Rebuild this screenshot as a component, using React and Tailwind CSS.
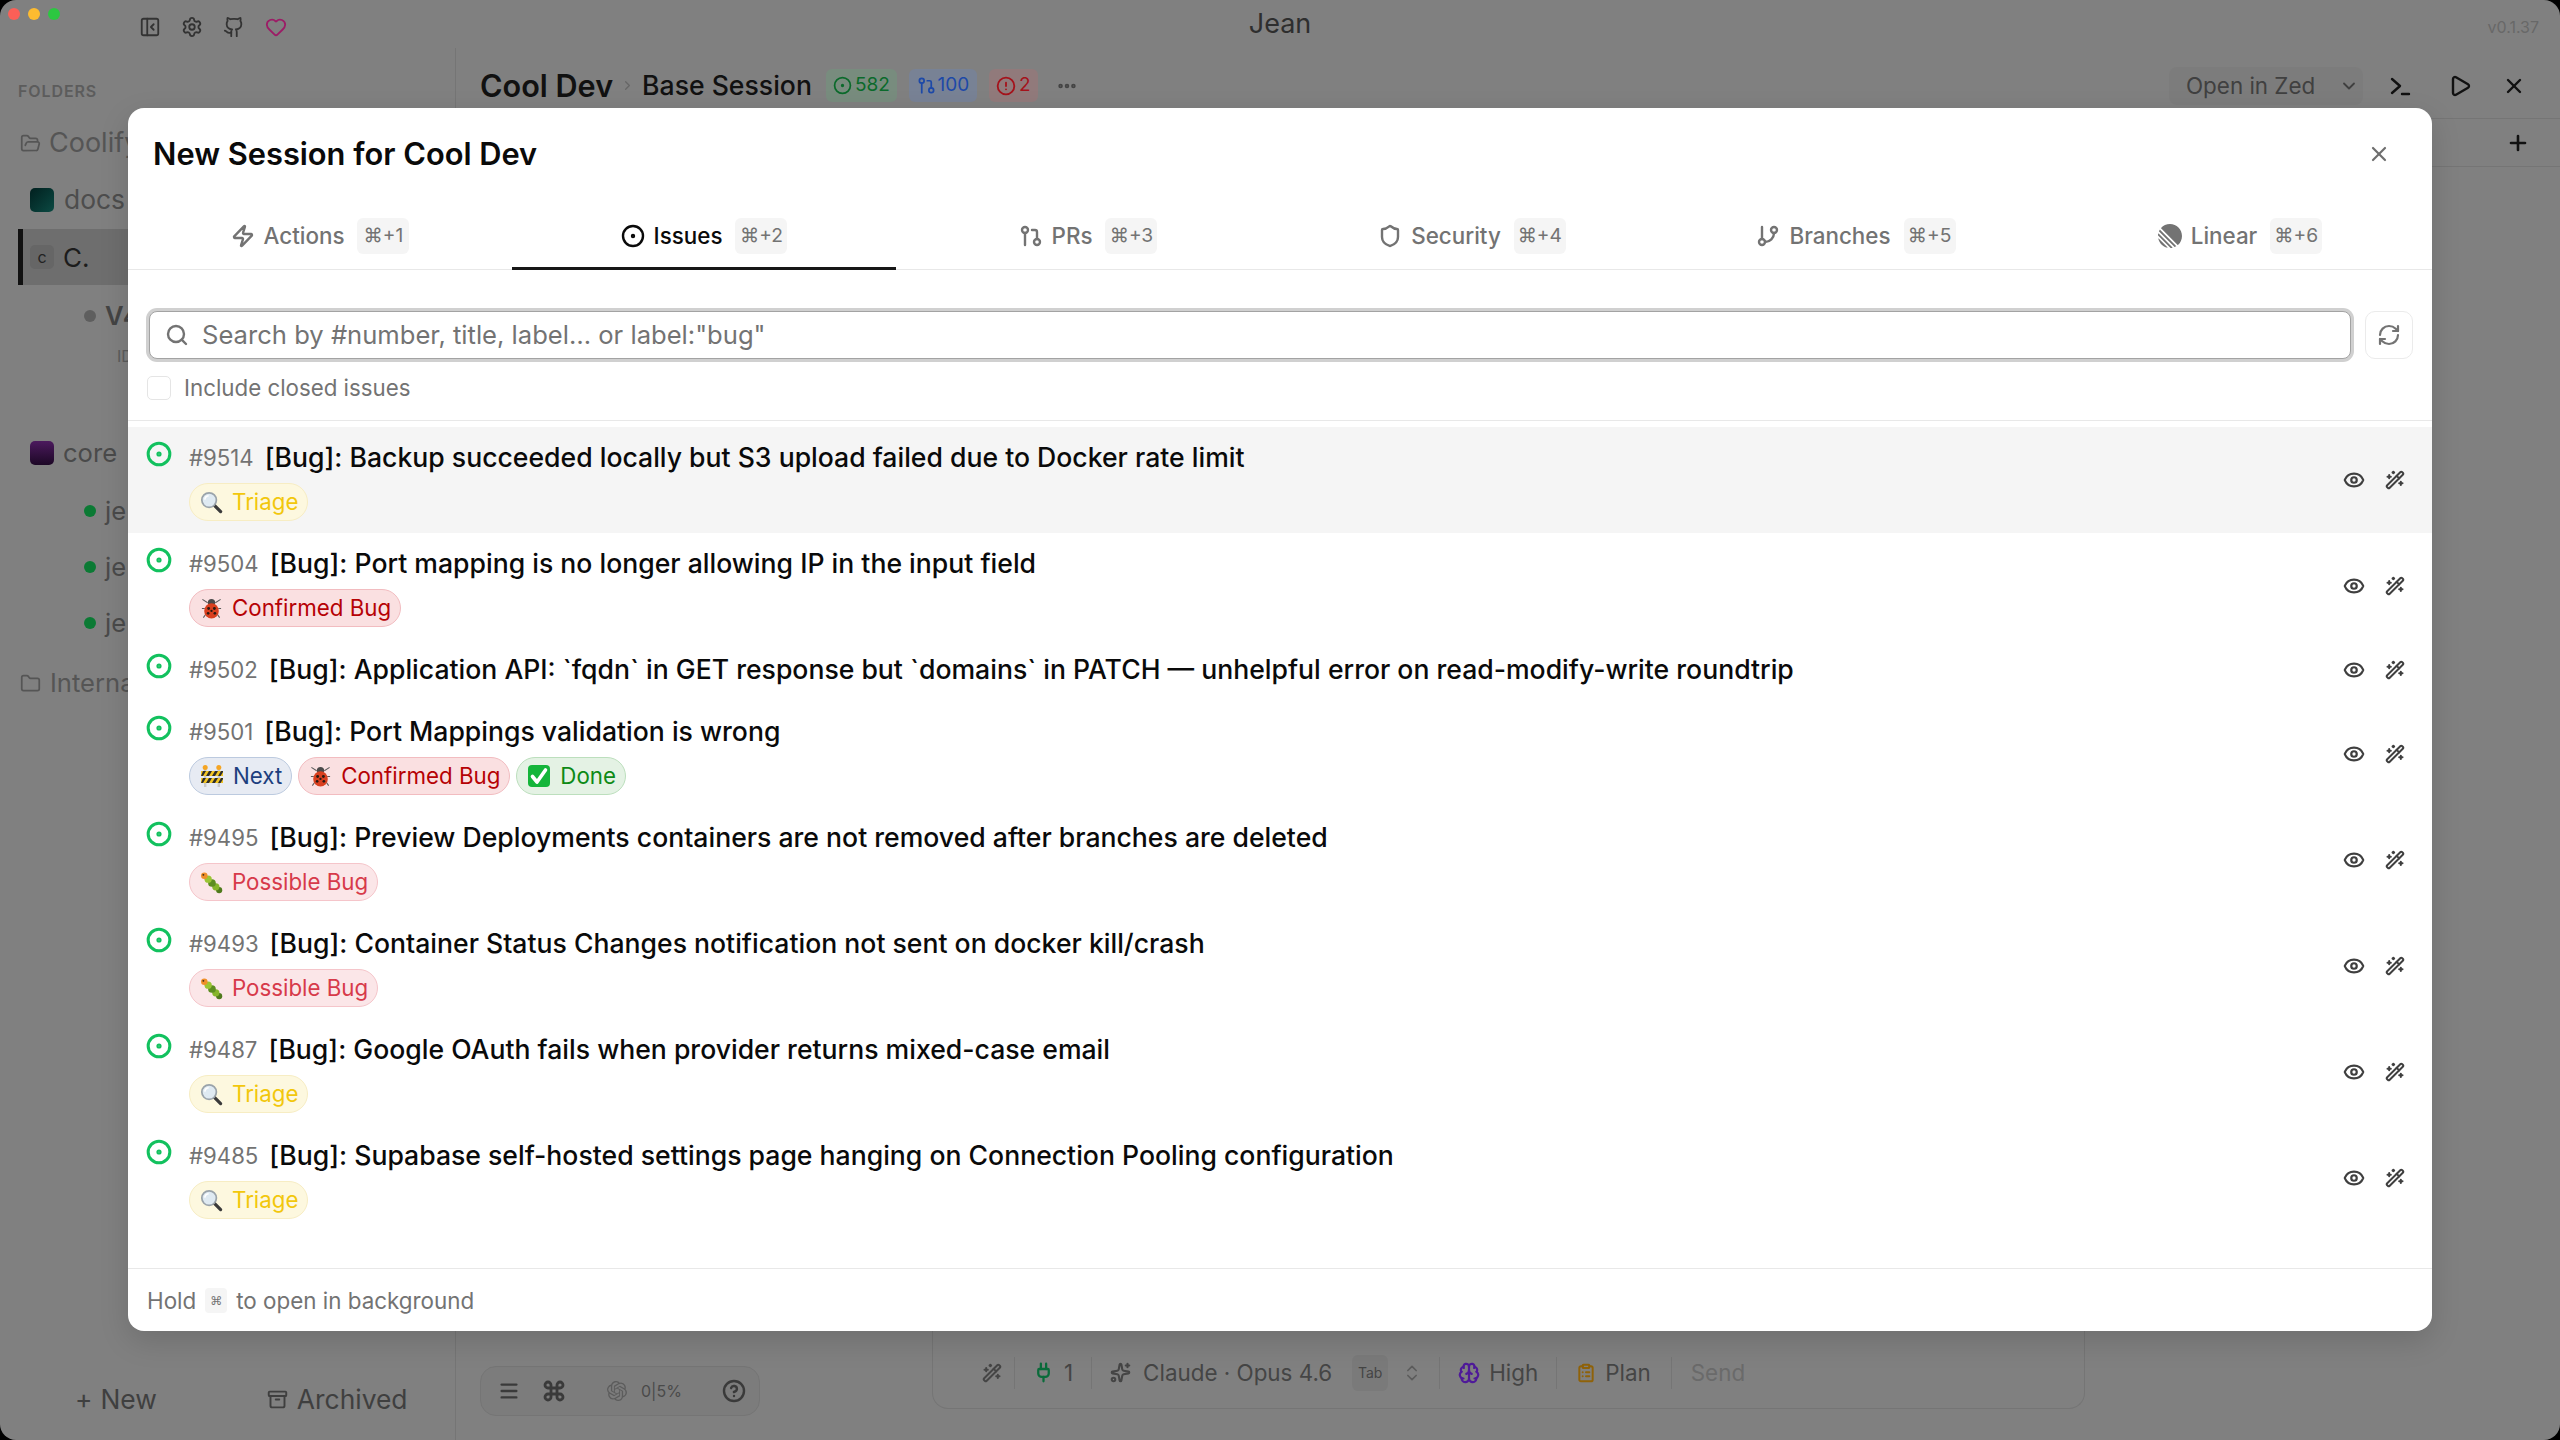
import React from "react";
import {
  Archive, Brain, ChevronDown, ChevronRight, ChevronsUpDown, CircleAlert, CircleDot, CircleHelp, ClipboardList,
  Command, Ellipsis, Eye, Folder, FolderOpen, GitBranch, GitPullRequest, Heart, Menu, PanelLeftClose, Play, Plug,
  Plus, RefreshCw, Search, Settings, Shield, Sparkles, WandSparkles, X, Zap, Github,
} from "lucide-react";
import { SiOpenai } from "react-icons/si";

const LinearIcon = ({ className }) => (
  <svg viewBox="0 0 100 100" className={className} fill="currentColor">
    <path d="M1.22541 61.5228c-.2225-.9485.90748-1.5459 1.59638-.857L39.3342 97.1782c.6889.6889.0915 1.8189-.857 1.5964C20.0515 94.4522 5.54779 79.9485 1.22541 61.5228Z" />
    <path d="M.00189135 46.8891c-.01764375.2833.08887215.5599.28957165.7606L52.3503 99.7085c.2007.2007.4773.3075.7606.2896 2.3692-.1476 4.6938-.46 6.9624-.9259.7645-.157 1.0301-1.0963.4782-1.6481L2.57595 39.4485c-.55186-.5519-1.49117-.2863-1.648174.4782-.465915 2.2686-.77832 4.5932-.92588465 6.9624Z" />
    <path d="M4.21093 29.7054c-.16649.3738-.08169.8106.20765 1.1l64.77602 64.776c.2894.2894.7262.3742 1.1.2077 1.7861-.7956 3.5171-1.6927 5.1855-2.684.5521-.328.6373-1.0867.1832-1.5407L8.43566 24.3367c-.45409-.4541-1.21271-.3689-1.54074.1832-.99132 1.6684-1.88843 3.3994-2.68399 5.1855Z" />
    <path d="M12.6587 18.074c-.3701-.3701-.393-.9637-.0443-1.3541C21.7795 6.45931 35.1114 0 49.9519 0 77.5927 0 100 22.4073 100 50.0481c0 14.8405-6.4593 28.1724-16.7199 37.3375-.3903.3487-.984.3258-1.3542-.0443L12.6587 18.074Z" />
  </svg>
);

const Magnifier = () => (
  <svg viewBox="0 0 24 24" className="w-[23px] h-[23px] shrink-0">
    <line x1="14" y1="14" x2="21.5" y2="21.5" stroke="#3a3a3a" strokeWidth="3.4" strokeLinecap="round" />
    <circle cx="9.5" cy="9.5" r="7.6" fill="#dfeaf2" stroke="#9aa3aa" strokeWidth="1.8" />
    <path d="M5 9a4.5 4.5 0 0 1 4-4" stroke="#ffffff" strokeWidth="1.6" fill="none" />
  </svg>
);
const Ladybug = () => (
  <svg viewBox="0 0 24 24" className="w-[23px] h-[23px] shrink-0">
    <g stroke="#5b5b5b" strokeWidth="1.1" fill="none">
      <path d="M8 6 2.5 2.5M16 6l5.5-3.5M5 12H2M19 12h3M6 18l-2.5 3.5M18 18l2.5 3.5" />
    </g>
    <circle cx="12" cy="6" r="3.8" fill="#4a4a4a" />
    <ellipse cx="12" cy="14.5" rx="7.6" ry="8" fill="#d9401f" />
    <circle cx="9" cy="12" r="1.5" fill="#2b1a14" />
    <circle cx="15" cy="12" r="1.5" fill="#2b1a14" />
    <circle cx="8.5" cy="17" r="1.4" fill="#2b1a14" />
    <circle cx="15.5" cy="17" r="1.4" fill="#2b1a14" />
    <circle cx="12" cy="14.5" r="1.2" fill="#2b1a14" />
  </svg>
);
const Barrier = () => (
  <svg viewBox="0 0 24 24" className="w-[24px] h-[24px] shrink-0">
    <rect x="4" y="3" width="2.4" height="20" fill="#c9c9c9" />
    <rect x="17.6" y="3" width="2.4" height="20" fill="#c9c9c9" />
    <circle cx="5.2" cy="3.5" r="2.5" fill="#f5a524" />
    <circle cx="18.8" cy="3.5" r="2.5" fill="#f5a524" />
    <rect x="1" y="7" width="22" height="5" fill="#f2c522" />
    <rect x="1" y="14" width="22" height="5" fill="#f2c522" />
    <path d="M3 7h3l-3 5H1zM9 7h3l-3 5H6zM15 7h3l-3 5h-3zM21 7h2v1l-2.400 4H18zM3 14h3l-3 5H1zM9 14h3l-3 5H6zM15 14h3l-3 5h-3zM21 14h2v1l-2.400 4H18z" fill="#2d2d2d" />
  </svg>
);
const CheckEmoji = () => (
  <svg viewBox="0 0 24 24" className="w-[24px] h-[24px] shrink-0">
    <rect x="1" y="1" width="22" height="22" rx="4" fill="#14b53a" />
    <path d="M5.500 12.500 10 18l8.500-12" stroke="#ffffff" strokeWidth="3.6" fill="none" strokeLinecap="round" strokeLinejoin="round" />
  </svg>
);
const Caterpillar = () => (
  <svg viewBox="0 0 24 24" className="w-[23px] h-[23px] shrink-0">
    <circle cx="20" cy="20" r="3.200" fill="#4f7a1c" />
    <circle cx="16.500" cy="16.500" r="3.800" fill="#86b52a" />
    <circle cx="12.500" cy="12.500" r="4" fill="#5d8d20" />
    <circle cx="8.500" cy="8.500" r="3.800" fill="#9ac534" />
    <circle cx="4.500" cy="5" r="3.400" fill="#ef8f2a" />
    <circle cx="3.500" cy="4" r="1" fill="#3a2a1a" />
  </svg>
);

const labels = {
  triage: { e: <Magnifier />, t: "Triage", c: "bg-[#fdf8df] border-[#f7edc3] text-[#f2c70c]" },
  confirmed: { e: <Ladybug />, t: "Confirmed Bug", c: "bg-[#fae0e1] border-[#f2bcc0] text-[#b60205]" },
  possible: { e: <Caterpillar />, t: "Possible Bug", c: "bg-[#fbe6e8] border-[#f5c5ca] text-[#d73a4a]" },
  next: { e: <Barrier />, t: "Next", c: "bg-[#e7ebf3] border-[#bccadf] text-[#1d3f7e]" },
  done: { e: <CheckEmoji />, t: "Done", c: "bg-[#e4f2e4] border-[#bcdfbd] text-[#0e8a16]" },
};

const Badge = ({ k }) => {
  const l = labels[k];
  return (
    <span className={`h-[38px] rounded-full border flex items-center gap-[9px] pl-[10px] pr-[9px] text-[22.3px] ${l.c}`}>
      {l.e}
      <span>{l.t}</span>
    </span>
  );
};

const issues = [
  { n: "#9514", t: "[Bug]: Backup succeeded locally but S3 upload failed due to Docker rate limit", l: ["triage"], hover: true },
  { n: "#9504", t: "[Bug]: Port mapping is no longer allowing IP in the input field", l: ["confirmed"] },
  { n: "#9502", t: "[Bug]: Application API: `fqdn` in GET response but `domains` in PATCH — unhelpful error on read-modify-write roundtrip", l: [] },
  { n: "#9501", t: "[Bug]: Port Mappings validation is wrong", l: ["next", "confirmed", "done"] },
  { n: "#9495", t: "[Bug]: Preview Deployments containers are not removed after branches are deleted", l: ["possible"] },
  { n: "#9493", t: "[Bug]: Container Status Changes notification not sent on docker kill/crash", l: ["possible"] },
  { n: "#9487", t: "[Bug]: Google OAuth fails when provider returns mixed-case email", l: ["triage"] },
  { n: "#9485", t: "[Bug]: Supabase self-hosted settings page hanging on Connection Pooling configuration", l: ["triage"] },
];

const Row = ({ it }) => (
  <div className={`flex items-start pt-[16px] pl-[18px] pr-[27px] ${it.l.length ? "h-[106px]" : "h-[62px]"} ${it.hover ? "bg-[#f5f5f5]" : ""}`}>
    <CircleDot className="w-[26px] h-[26px] text-[#12c15e] shrink-0 -mt-[2px]" strokeWidth={2.8} />
    <div className="ml-[17px] flex-1 min-w-0">
      <div className="h-[30px] flex items-center gap-[11px] whitespace-nowrap">
        <span className="text-[22.2px] text-[#737373]">{it.n}</span>
        <span className="text-[26.6px] font-medium text-[#0a0a0a]">{it.t}</span>
      </div>
      {it.l.length > 0 && (
        <div className="mt-[10px] flex gap-[6px]">
          {it.l.map((k) => <Badge key={k} k={k} />)}
        </div>
      )}
    </div>
    <div className="self-center -mt-[16px] flex items-center gap-[20px] text-[#3f3f3f]">
      <Eye className="w-[22px] h-[22px]" strokeWidth={2.4} />
      <WandSparkles className="w-[20px] h-[20px]" strokeWidth={2.4} />
    </div>
  </div>
);

const tabs = [
  { I: Zap, t: "Actions", k: "⌘+1" },
  { I: CircleDot, t: "Issues", k: "⌘+2", active: true },
  { I: GitPullRequest, t: "PRs", k: "⌘+3" },
  { I: Shield, t: "Security", k: "⌘+4" },
  { I: GitBranch, t: "Branches", k: "⌘+5" },
  { I: LinearIcon, t: "Linear", k: "⌘+6" },
];

const Tab = ({ tab }) => {
  const I = tab.I;
  return (
    <div className={`relative flex-1 flex items-center justify-center text-[22.4px] font-medium ${tab.active ? "text-[#0a0a0a]" : "text-[#737373]"}`}>
      <I className="w-[24px] h-[24px] mr-[9px]" strokeWidth={2.4} />
      <span>{tab.t}</span>
      <span className="ml-[13px] w-[52px] h-[36px] rounded-[6px] bg-[#f5f5f5] flex items-center justify-center text-[19.2px] font-normal text-[#737373]" style={{ fontFamily: "Inter, 'DejaVu Sans', sans-serif" }}>{tab.k}</span>
      {tab.active && <span className="absolute left-0 right-0 -bottom-px h-[3px] bg-[#171717]" />}
    </div>
  );
};

const TreeDot = ({ c, t, bold }) => (
  <div className="h-[56px] flex items-center pl-[84px] gap-[9px] whitespace-nowrap">
    <span className={`w-[12px] h-[12px] rounded-full ${c}`} />
    <span className={`text-[25.6px] ${bold ? "font-semibold text-[#444]" : "text-[#4a4a4a]"}`}>{t}</span>
  </div>
);

const Sep = () => <span className="block w-px h-[32px] bg-[#757575]" />;

export default function App() {
  return (
    <div className="relative w-[2560px] h-[1440px] bg-black overflow-hidden" style={{ fontFamily: "Inter, 'Liberation Sans', sans-serif" }}>
      <div className="h-full rounded-[16px] bg-[#808080] flex flex-col">
        {/* Title bar */}
        <div className="relative h-[48px] shrink-0 grid grid-cols-[1fr_auto_1fr] items-center">
          <div className="absolute left-[8px] top-[8px] flex gap-[8px]">
            <span className="w-[12px] h-[12px] rounded-full bg-[#fb5f57]" />
            <span className="w-[12px] h-[12px] rounded-full bg-[#fdbb30]" />
            <span className="w-[12px] h-[12px] rounded-full bg-[#2cc741]" />
          </div>
          <div className="pl-[139px] pt-[6px] flex items-center gap-[20px] text-[#333]">
            <PanelLeftClose className="w-[22px] h-[22px]" strokeWidth={2} />
            <Settings className="w-[22px] h-[22px]" strokeWidth={2} />
            <Github className="w-[22px] h-[22px]" strokeWidth={2} />
            <Heart className="w-[22px] h-[22px] text-[#9c1c66]" strokeWidth={2} />
          </div>
          <div className="text-center text-[27px] text-[#2e2e2e]">Jean</div>
          <div className="pr-[21px] pt-[6px] text-[16px] text-[#686868] text-right">v0.1.37</div>
        </div>
        <div className="flex-1 flex min-h-0">
          {/* Sidebar */}
          <aside className="w-[456px] shrink-0 border-r border-[#757575] flex flex-col">
            <div className="pl-[18px] pt-[33px] text-[16px] font-semibold text-[#5c5c5c] tracking-[0.9px] leading-[20px]">FOLDERS</div>
            <div className="mt-[19px] h-[46px] pl-[20px] flex items-center gap-[8px] text-[27px] text-[#555]">
              <FolderOpen className="w-[21px] h-[21px]" strokeWidth={2} /><span>Coolify</span>
            </div>
            <div className="mt-[12px] h-[44px] pl-[30px] flex items-center gap-[10px] text-[26.4px] text-[#4d4d4d]">
              <span className="w-[24px] h-[24px] rounded-[5px] bg-gradient-to-br from-[#02201f] to-[#0c4a43]" /><span>docs</span>
            </div>
            <div className="mt-[7px] ml-[18px] h-[56px] border-l-[5px] border-[#111] bg-[#6e6e6e] pl-[7px] flex items-center gap-[9px]">
              <span className="w-[24px] h-[24px] rounded-[5px] bg-[#666] text-[#222] text-[16px] flex items-center justify-center">c</span>
              <span className="text-[26px] text-[#1c1c1c]">C.</span>
            </div>
            <div className="-mb-[3px] mt-[3px]"><TreeDot c="bg-[#5e5e5e]" t="V4" bold /></div>
            <div className="h-[30px] pl-[117px] text-[16px] text-[#5c5c5c] flex items-center">ID</div>
            <div className="mt-[60px] h-[44px] pl-[30px] flex items-center gap-[9px] text-[25.6px] text-[#4a4a4a]">
              <span className="w-[24px] h-[24px] rounded-[5px] bg-gradient-to-b from-[#4c1a5e] to-[#1d0826]" /><span>core</span>
            </div>
            <div className="mt-[8px]">
              <TreeDot c="bg-[#0b7a34]" t="je" />
              <TreeDot c="bg-[#0b7a34]" t="je" />
              <TreeDot c="bg-[#0b7a34]" t="je" />
            </div>
            <div className="mt-[7px] h-[50px] pl-[20px] flex items-center gap-[9px] text-[25.6px] text-[#555]">
              <Folder className="w-[21px] h-[21px]" strokeWidth={2} /><span>Internal</span>
            </div>
            <div className="mt-auto mb-[20px] h-[40px] flex items-center text-[26.4px] text-[#3f3f3f]">
              <span className="ml-[75px] flex items-center gap-[8px]"><span>+</span><span>New</span></span>
              <span className="ml-[110px] flex items-center gap-[9px]"><Archive className="w-[21px] h-[21px]" strokeWidth={2.2} /><span>Archived</span></span>
            </div>
          </aside>
          {/* Main */}
          <main className="flex-1 flex flex-col min-w-0">
            <div className="h-[72px] shrink-0 -mt-[1px] pt-[6px] border-b border-[#757575] flex items-center pl-[24px] pr-[34px]">
              <span className="text-[30.6px] font-semibold text-[#111]">Cool Dev</span>
              <ChevronRight className="mx-[7px] w-[15px] h-[15px] text-[#666]" />
              <span className="text-[26.6px] font-medium text-[#111]">Base Session</span>
              <span className="ml-[14px] h-[33px] w-[71px] rounded-[6px] bg-[#788c7e] flex items-center justify-center gap-[3px] text-[19px] text-[#0b6a2b]"><CircleDot className="w-[19px] h-[19px]" strokeWidth={2.2} />582</span>
              <span className="ml-[12px] h-[33px] w-[68px] rounded-[6px] bg-[#788295] flex items-center justify-center gap-[2px] text-[19px] text-[#1d49a8]"><GitPullRequest className="w-[19px] h-[19px]" strokeWidth={2.2} />100</span>
              <span className="ml-[12px] h-[33px] w-[49px] rounded-[6px] bg-[#917a7b] flex items-center justify-center gap-[3px] text-[19px] text-[#a5121b]"><CircleAlert className="w-[20px] h-[20px]" strokeWidth={2.2} />2</span>
              <Ellipsis className="ml-[18px] w-[22px] h-[22px] text-[#444]" strokeWidth={3} />
              <div className="ml-auto flex items-center">
                <div className="w-[194px] h-[38px] rounded-[8px] bg-[#7c7c7c] flex items-center pl-[17px] text-[22.4px] text-[#404040]">
                  <span>Open in Zed</span>
                  <ChevronDown className="ml-[24px] w-[20px] h-[20px]" strokeWidth={2.2} />
                </div>
                <span className="ml-[25px] text-[#111] flex"><svg viewBox="0 0 24 24" className="w-[24px] h-[24px]" fill="none" stroke="currentColor" strokeWidth="2.4" strokeLinecap="round" strokeLinejoin="round"><path d="m4 5 8 7-8 7M14 20h7" /></svg></span>
                <Play className="ml-[36px] w-[24px] h-[24px] text-[#111]" strokeWidth={2.4} />
                <X className="ml-[30px] w-[24px] h-[24px] text-[#111]" strokeWidth={2.4} />
              </div>
            </div>
            <div className="h-[48px] shrink-0 border-b border-[#757575] flex items-center justify-end pr-[30px]">
              <Plus className="w-[24px] h-[24px] text-[#111]" strokeWidth={2.6} />
            </div>
            <div className="flex-1 min-h-0 flex flex-col justify-end">
              <div className="flex items-end pb-[24px] pl-[24px]">
                <div className="w-[280px] h-[50px] rounded-[16px] border border-[#757575] bg-[#7c7c7c] flex items-center text-[#3a3a3a] shrink-0">
                  <Menu className="ml-[17px] w-[22px] h-[22px]" strokeWidth={2.6} />
                  <Command className="ml-[22px] w-[24px] h-[24px]" strokeWidth={2.8} />
                  <SiOpenai className="ml-[41px] w-[20px] h-[20px] text-[#5c5c5c]" />
                  <span className="ml-[14px] text-[16px] text-[#4a4a4a]">0|5%</span>
                  <CircleHelp className="ml-[40px] w-[24px] h-[24px]" strokeWidth={2.4} />
                </div>
                <div className="ml-[172px] w-[1153px] h-[120px] mb-[7px] rounded-b-[16px] border border-t-0 border-[#757575] flex items-center pl-[49px] text-[22.4px] text-[#454545] shrink-0 pt-[60px] pb-[12px]">
                  <WandSparkles className="w-[20px] h-[20px]" strokeWidth={2.4} />
                  <span className="ml-[12px] mr-[18px]"><Sep /></span>
                  <Plug className="w-[21px] h-[21px] text-[#0a6b3a]" strokeWidth={2.6} />
                  <span className="ml-[10px]">1</span>
                  <span className="ml-[18px] mr-[18px]"><Sep /></span>
                  <Sparkles className="w-[21px] h-[21px]" strokeWidth={2.4} />
                  <span className="ml-[12px] whitespace-nowrap">Claude · Opus 4.6</span>
                  <span className="ml-[20px] w-[36px] h-[36px] rounded-[6px] bg-[#7a7a7a] text-[14px] flex items-center justify-center">Tab</span>
                  <ChevronsUpDown className="ml-[14px] w-[20px] h-[20px] text-[#5c5c5c]" strokeWidth={2} />
                  <span className="ml-[17px] mr-[18px]"><Sep /></span>
                  <Brain className="w-[22px] h-[22px] text-[#4f1a99]" strokeWidth={2.4} />
                  <span className="ml-[9px]">High</span>
                  <span className="ml-[18px] mr-[19px]"><Sep /></span>
                  <ClipboardList className="w-[20px] h-[20px] text-[#8f6209]" strokeWidth={2.4} />
                  <span className="ml-[9px]">Plan</span>
                  <span className="ml-[20px] mr-[19px]"><Sep /></span>
                  <span className="text-[#6a6a6a]">Send</span>
                </div>
              </div>
            </div>
          </main>
        </div>
      </div>

      {/* Modal */}
      <div className="absolute left-[128px] top-[108px] w-[2304px] h-[1223px] bg-white rounded-[16px] shadow-[0_10px_30px_rgba(0,0,0,0.14)] flex flex-col overflow-hidden">
        <div className="h-[94px] shrink-0 flex items-center justify-between pl-[25px] pr-[41px]">
          <h2 className="text-[30.8px] font-semibold text-[#0a0a0a] -mt-[1px]">New Session for Cool Dev</h2>
          <X className="w-[24px] h-[24px] text-[#6e6e6e] -mt-[3px]" strokeWidth={2.2} />
        </div>
        <div className="h-[68px] shrink-0 flex border-b border-[#e8e8e8]">
          {tabs.map((t) => <Tab key={t.t} tab={t} />)}
        </div>
        <div className="shrink-0 h-[151px] border-b border-[#e8e8e8] pl-[21px] pr-[19px] pt-[41px]">
          <div className="flex items-center gap-[14px]">
            <div className="flex-1 h-[48px] rounded-[8px] border border-[#a3a3a3] ring-[3px] ring-[#d0d0d0] bg-white flex items-center pl-[15px] text-[25.6px] text-[#737373]">
              <Search className="w-[24px] h-[24px] mr-[13px]" strokeWidth={2.4} />
              <span>Search by #number, title, label… or label:"bug"</span>
            </div>
            <div className="w-[48px] h-[48px] rounded-[10px] border border-[#ebebeb] flex items-center justify-center text-[#737373]">
              <RefreshCw className="w-[24px] h-[24px]" strokeWidth={2.2} />
            </div>
          </div>
          <div className="mt-[12px] ml-[-2px] flex items-center gap-[13px]">
            <span className="w-[24px] h-[24px] rounded-[5px] border border-[#e5e5e5]" />
            <span className="text-[22.3px] text-[#737373]">Include closed issues</span>
          </div>
        </div>
        <div className="flex-1 min-h-0 pt-[6px]">
          {issues.map((it) => <Row key={it.n} it={it} />)}
        </div>
        <div className="h-[63px] shrink-0 border-t border-[#e8e8e8] pl-[19px] pt-[1px] flex items-center text-[22.4px] text-[#737373]">
          <span>Hold</span>
          <span className="mx-[9px] w-[22px] h-[25px] rounded-[4px] bg-[#f5f5f5] flex items-center justify-center text-[12px]" style={{ fontFamily: "'DejaVu Sans', sans-serif" }}>⌘</span>
          <span>to open in background</span>
        </div>
      </div>
    </div>
  );
}
